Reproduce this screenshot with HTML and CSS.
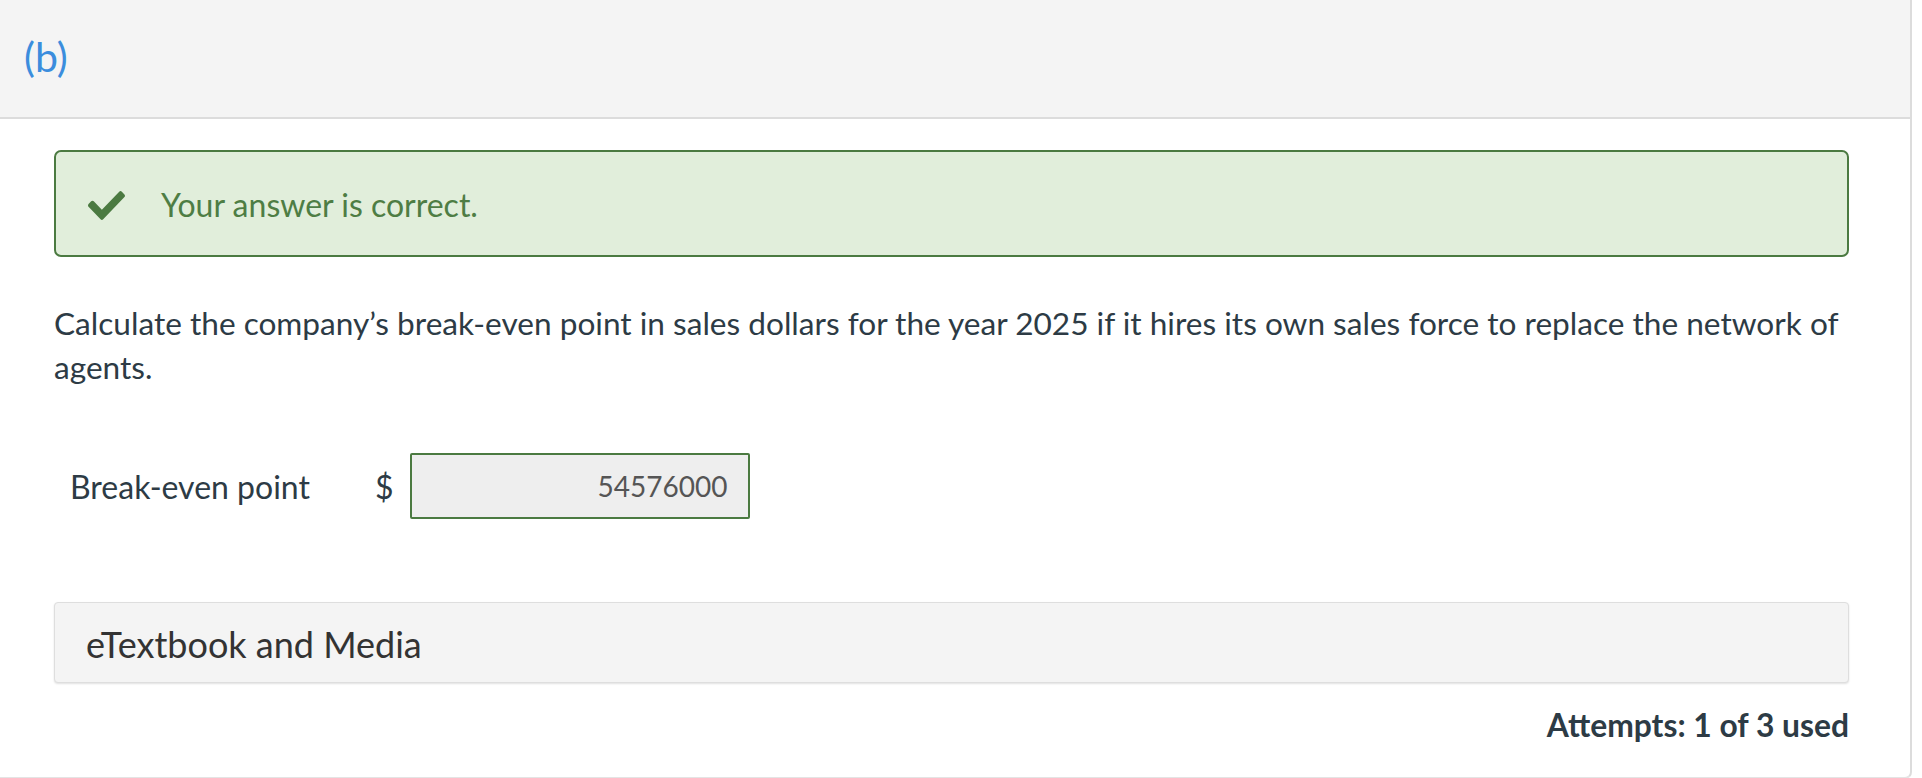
FILE: index.html
```html
<!DOCTYPE html>
<html lang="en">
<head>
<meta charset="utf-8">
<title>Question (b)</title>
<link rel="stylesheet" href="styles.css">
</head>
<body>
<div class="card">
  <div class="part-header"><span class="part-label">(b)</span></div>
  <div class="part-body">
    <div class="alert">
      <svg class="check" viewBox="0 64 512 384" preserveAspectRatio="none" aria-hidden="true"><path d="M173.898 439.404l-166.4-166.4c-9.997-9.997-9.997-26.206 0-36.204l36.203-36.204c9.997-9.998 26.207-9.998 36.204 0L192 312.69 432.095 72.596c9.997-9.997 26.207-9.997 36.204 0l36.203 36.204c9.997 9.997 9.997 26.206 0 36.204l-294.4 294.401c-9.998 9.997-26.207 9.997-36.204-.001z"/></svg>
      <span class="alert-text">Your answer is correct.</span>
    </div>
    <p class="question">Calculate the company’s break-even point in sales dollars for the year 2025 if it hires its own sales force to replace the network of agents.</p>
    <div class="answer-row">
      <span class="answer-label">Break-even point</span>
      <span class="currency">$</span>
      <div class="answer-input">54576000</div>
    </div>
    <div class="media-box">eTextbook and Media</div>
    <div class="attempts">Attempts: 1 of 3 used</div>
  </div>
</div>
</body>
</html>
```
FILE: styles.css
```css
html, body {
  margin: 0;
  padding: 0;
  background: #ffffff;
}
body {
  font-family: Lato, "Open Sans", "Liberation Sans", sans-serif;
  color: #2d3b45;
  overflow: hidden;
}
.card {
  width: 1912px;
  height: 779px;
  box-sizing: border-box;
  border-right: 2px solid #dcdcdc;
  border-bottom: 2px solid #e4e4e4;
  border-bottom-right-radius: 7px;
  overflow: hidden;
}
.part-header {
  height: 117px;
  background: #f4f4f4;
  border-bottom: 2px solid #dcdcdc;
  display: flex;
  align-items: center;
  padding-left: 24px;
}
.part-label {
  font-size: 41px;
  color: #3b8ddd;
  line-height: 1;
  margin-top: -4px;
}
.part-body {
  padding: 31px 61px 0 54px;
}
.alert {
  height: 107px;
  box-sizing: border-box;
  border: 2px solid #4b7a41;
  border-radius: 7px;
  background: #e1eedb;
  display: flex;
  align-items: center;
  padding-left: 32px;
}
.check {
  width: 37px;
  height: 29px;
  fill: #4b7a41;
  margin-right: 36px;
  margin-top: 3px;
}
.alert-text {
  font-size: 32px;
  color: #4e7d44;
  margin-top: 2px;
}
.question {
  margin: 44px 0 0 0;
  font-size: 31.6px;
  line-height: 44px;
}
.answer-row {
  display: flex;
  align-items: center;
  margin-top: 64px;
  padding-left: 16px;
}
.answer-label {
  font-size: 32px;
  margin-right: 65px;
}
.currency {
  font-size: 32px;
  margin-right: 16px;
}
.answer-input {
  width: 340px;
  height: 66px;
  box-sizing: border-box;
  border: 2px solid #4b7a41;
  border-radius: 2px;
  background: #eeeeee;
  color: #555555;
  font-size: 28px;
  display: flex;
  align-items: center;
  justify-content: flex-end;
  padding-right: 20px;
}
.media-box {
  margin-top: 83px;
  height: 81px;
  box-sizing: border-box;
  background: #f4f4f4;
  border: 1px solid #dedede;
  border-radius: 4px;
  box-shadow: 0 1px 2px rgba(0, 0, 0, 0.12);
  display: flex;
  align-items: center;
  padding-left: 31px;
  padding-top: 2px;
  font-size: 36px;
  color: #333333;
}
.attempts {
  margin-top: 20px;
  text-align: right;
  font-size: 31.8px;
  font-weight: 700;
  line-height: 44px;
}
```
